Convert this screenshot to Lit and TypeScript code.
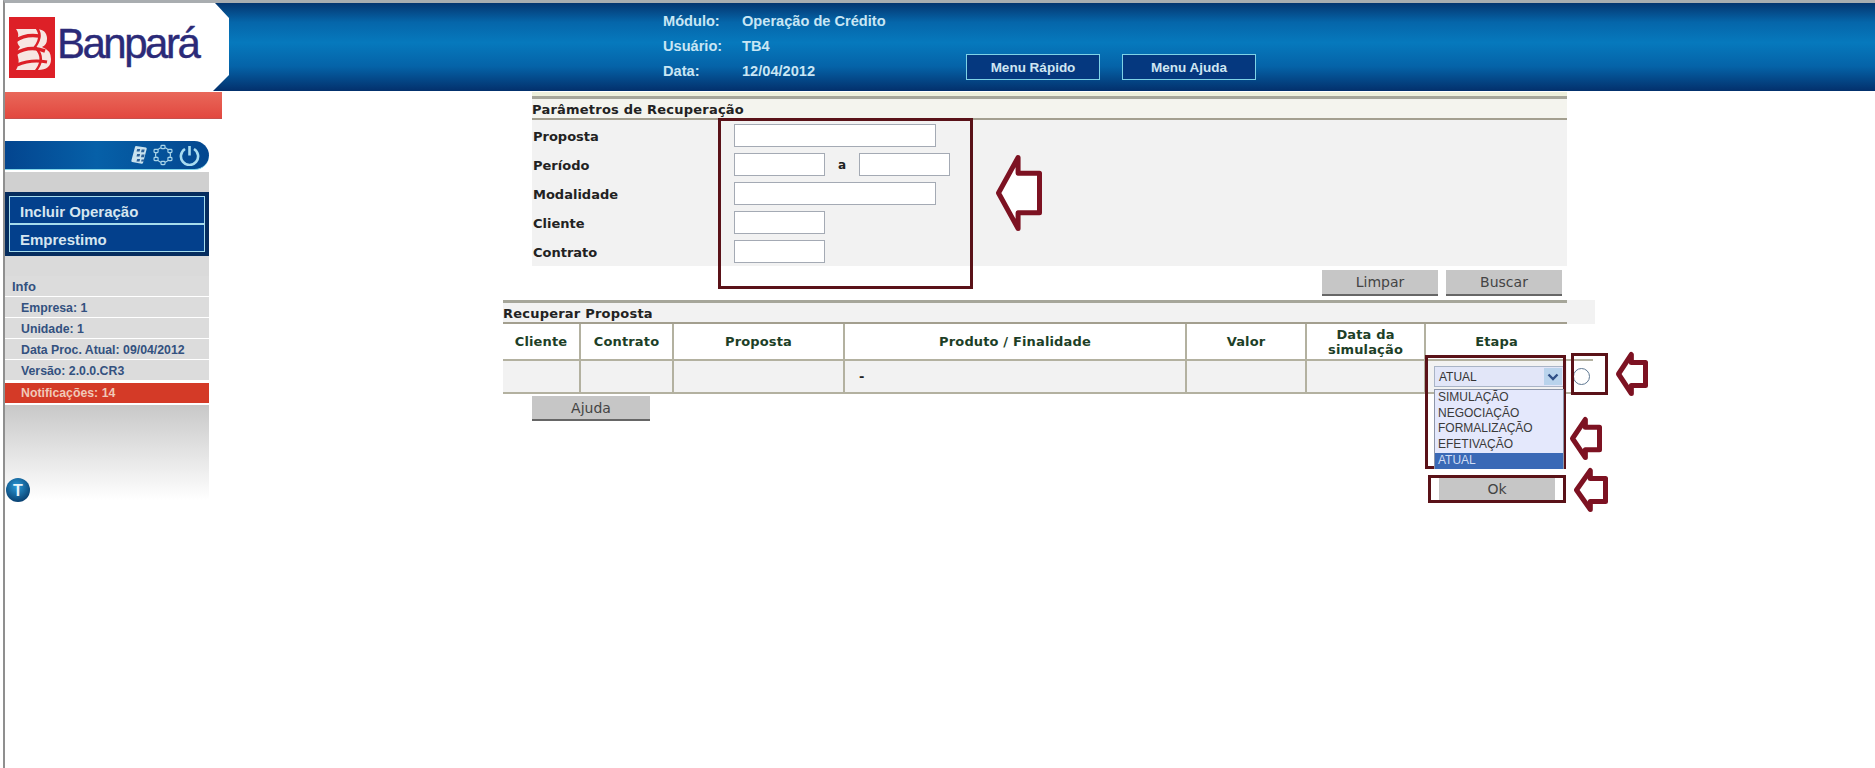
import { LitElement, html, css, svg } from 'lit';
import { customElement } from 'lit/decorators.js';

const INFO = ['Empresa: 1', 'Unidade: 1', 'Data Proc. Atual: 09/04/2012', 'Versão: 2.0.0.CR3'];
const FIELDS = [
  { label: 'Proposta', inputs: ['wide'] },
  { label: 'Período', inputs: ['short', 'short'] },
  { label: 'Modalidade', inputs: ['wide'] },
  { label: 'Cliente', inputs: ['short'] },
  { label: 'Contrato', inputs: ['short'] },
];
const COLUMNS = [
  { title: 'Cliente', width: 77 },
  { title: 'Contrato', width: 93 },
  { title: 'Proposta', width: 171 },
  { title: 'Produto / Finalidade', width: 342 },
  { title: 'Valor', width: 120 },
  { title: 'Data da simulação', width: 119 },
  { title: 'Etapa', width: 142 },
];
const OPTIONS = ['SIMULAÇÃO', 'NEGOCIAÇÃO', 'FORMALIZAÇÃO', 'EFETIVAÇÃO', 'ATUAL'];

// Red annotations drawn over the page: [left, top, width, height]
const BOXES = [
  [718, 118, 255, 171],
  [1425, 355, 141, 114],
  [1571, 353, 37, 42],
  [1428, 475, 138, 28],
];
const ARROWS = [
  [996, 155, 46, 76],
  [1616, 352, 32, 44],
  [1570, 417, 32, 43],
  [1574, 468, 34, 44],
];

@customElement('app-root')
export class AppRoot extends LitElement {
  static override styles = css`
    :host {
      display: block;
    }
    .page {
      position: relative;
      box-sizing: border-box;
      height: 768px;
      margin-left: 3px;
      border-left: 2px solid #8f8f8f;
      border-top: 3px solid #a9adb0;
      overflow: hidden;
      background: #fff;
      font-family: 'Liberation Sans', Arial, sans-serif;
    }
    header {
      display: flex;
      height: 88px;
      background: linear-gradient(#04356f 0%, #0566aa 22%, #0679bd 45%, #0563a8 72%, #03306c 100%);
    }
    .logo {
      display: flex;
      align-items: flex-start;
      box-sizing: border-box;
      width: 224px;
      height: 88px;
      padding: 14px 0 0 4px;
      background: #fff;
      clip-path: polygon(0 0, 210px 0, 224px 15px, 224px 72px, 208px 88px, 0 88px);
    }
    .logo svg {
      flex: none;
    }
    .logo span {
      margin: 3px 0 0 2px;
      font-size: 42px;
      line-height: 48px;
      letter-spacing: -2.5px;
      color: #2b2a78;
      -webkit-text-stroke: 0.4px #2b2a78;
    }
    .head-info {
      display: grid;
      grid-template-columns: 79px auto;
      grid-auto-rows: 25px;
      align-items: center;
      width: 303px;
      margin: 5px 0 0 434px;
      font-size: 14.6px;
      font-weight: bold;
      color: #c9e6f4;
    }
    .head-actions {
      display: flex;
      gap: 22px;
      margin-top: 51px;
    }
    .head-actions button {
      width: 134px;
      height: 26px;
      padding: 0;
      border: 1px solid #7fd3e6;
      background: #05387f;
      color: #cfe6f2;
      font: bold 13.5px 'Liberation Sans', Arial, sans-serif;
    }
    .content {
      display: flex;
    }
    aside {
      flex: none;
      width: 217px;
    }
    .red-bar {
      height: 26px;
      margin-top: 1px;
      background: linear-gradient(#e9685a, #e2483f);
      border-bottom: 1px solid #c8504c;
    }
    .side-col {
      width: 204px;
    }
    .tools {
      display: flex;
      align-items: center;
      justify-content: flex-end;
      gap: 5px;
      box-sizing: border-box;
      height: 29px;
      margin-top: 22px;
      padding-right: 9px;
      background: linear-gradient(90deg, #03458f, #0660a8 45%, #03478f);
      border-bottom: 1px solid #7fd6ea;
      border-radius: 0 15px 15px 0;
    }
    .spacer {
      height: 20px;
      margin-top: 2px;
      background: #d0d0d0;
    }
    .menu {
      box-sizing: border-box;
      height: 64px;
      padding: 4px;
      background: #052c5e;
    }
    .menu div {
      box-sizing: border-box;
      height: 28px;
      padding: 2px 0 0 10px;
      border: 1px solid #a6dcec;
      background: #03408c;
      color: #d6e6f0;
      font-size: 15px;
      font-weight: bold;
      line-height: 26px;
    }
    .side-gap {
      height: 20px;
      background: #dadada;
    }
    .rows {
      display: flex;
      flex-direction: column;
      gap: 1px;
      color: #33517f;
      font-size: 12.3px;
      font-weight: bold;
    }
    .rows div {
      height: 20px;
      padding-left: 16px;
      background: #dcdcdc;
      line-height: 22px;
    }
    .rows .title {
      padding-left: 7px;
      font-size: 13px;
    }
    .rows .alert {
      margin-top: 2px;
      background: #d43a27;
      color: #f0c8b8;
      line-height: 20px;
    }
    .fade {
      position: relative;
      height: 95px;
      margin-top: 2px;
      background: linear-gradient(#c8c8c8, #fff);
    }
    .fade svg {
      position: absolute;
      left: 0;
      bottom: -3px;
    }
    main {
      flex: 1;
      color: #222;
      font-family: 'DejaVu Sans', Verdana, sans-serif;
      font-size: 13px;
    }
    .params {
      width: 1035px;
      margin: 1px 0 0 310px;
      padding-top: 4px;
      background: linear-gradient(#eef0dc, #eef0dc) top / 100% 4px no-repeat;
    }
    .sec-title {
      box-sizing: border-box;
      height: 24px;
      border-top: 3px solid #a6a69a;
      border-bottom: 2px solid #a39f8f;
      background: #f4f4ee;
      font-weight: bold;
      line-height: 21px;
      letter-spacing: 0.22px;
    }
    .form {
      display: grid;
      gap: 6px;
      height: 146px;
      box-sizing: border-box;
      padding: 4px 0 0 1px;
      background: #f2f2f2;
      grid-auto-rows: 23px;
      font-weight: bold;
    }
    .field {
      display: grid;
      grid-template-columns: 201px auto;
      align-items: center;
    }
    .field > span {
      padding-top: 2px;
    }
    .inputs {
      display: flex;
      align-items: center;
    }
    input {
      box-sizing: border-box;
      height: 23px;
      padding: 0;
      border: 1px solid #a4aab4;
      background: #fff;
    }
    .wide {
      width: 202px;
    }
    .short {
      width: 91px;
    }
    .sep {
      width: 34px;
      text-align: center;
      font-size: 12px;
    }
    .actions {
      display: flex;
      justify-content: flex-end;
      gap: 8px;
      padding: 4px 5px 0 0;
    }
    .btn {
      box-sizing: border-box;
      width: 116px;
      height: 26px;
      padding: 0;
      border: none;
      border-bottom: 2px solid #666;
      background: #c6c6c6;
      color: #444;
      font: 14px 'DejaVu Sans', Verdana, sans-serif;
    }
    .results {
      width: 1092px;
      margin: 4px 0 0 281px;
    }
    .results-head {
      background: #f2f2f2;
    }
    .results-head .sec-title {
      width: 1064px;
      background: none;
    }
    table {
      width: 1090px;
      border-collapse: collapse;
      table-layout: fixed;
    }
    th {
      height: 35px;
      padding: 0;
      border: 2px solid #b3b1a0;
      border-width: 0 2px 2px 0;
      color: #1d3f27;
      font-size: 13px;
      line-height: 15px;
      letter-spacing: 0.15px;
    }
    th:nth-child(7) {
      border-right: none;
    }
    td {
      height: 31px;
      padding: 0;
      border: 2px solid #b3b1a0;
      border-width: 0 2px 2px 0;
      background: #f2f2f2;
      font-weight: bold;
    }
    td.dash {
      padding-left: 14px;
    }
    td.choice {
      position: relative;
      border-right: none;
    }
    th.radio-col {
      border-right: none;
    }
    td.radio-col {
      border-right: none;
      background: #fff;
    }
    .radio {
      box-sizing: border-box;
      width: 17px;
      height: 17px;
      margin-left: 6px;
      border: 1px solid #5f7892;
      border-radius: 50%;
      background: #fff;
    }
    .select {
      display: flex;
      align-items: center;
      justify-content: space-between;
      box-sizing: border-box;
      width: 130px;
      height: 21px;
      margin-left: 8px;
      padding: 0 1px 0 4px;
      border: 1px solid #a9b4c6;
      background: #e2e6f8;
      color: #333;
      font: 12px 'Liberation Sans', Arial, sans-serif;
    }
    .select i {
      display: flex;
      align-items: center;
      justify-content: center;
      width: 18px;
      height: 17px;
      background: #b9d3ec;
    }
    .list {
      position: absolute;
      top: 28px;
      left: 8px;
      z-index: 1;
      box-sizing: border-box;
      width: 130px;
      height: 80px;
      border: 1px solid #8d96aa;
      background: #e4e8fc;
      color: #3a3a3a;
      font: 12px/15.7px 'Liberation Sans', Arial, sans-serif;
    }
    .list div {
      padding-left: 3px;
    }
    .list .on {
      background: #3a69b6;
      color: #cfdcf4;
    }
    .foot {
      display: flex;
      justify-content: space-between;
      width: 1064px;
    }
    .foot .btn {
      height: 25px;
    }
    .help {
      width: 118px;
      margin: 2px 0 0 29px;
    }
    .foot .ok {
      height: 23px;
      margin: 83px 12px 0 0;
      border-bottom: none;
    }
    .mark {
      position: absolute;
      box-sizing: border-box;
      border: 3px solid #5a1218;
    }
    .arrow {
      position: absolute;
      overflow: visible;
    }
  `;

  private renderArrow([x, y, w, h]: number[]) {
    // page has a 5px left / 3px top offset from the window
    const mid = w * 0.48;
    const inset = 2.5;
    const points = [
      [inset, h / 2],
      [mid, inset],
      [mid, h * 0.24],
      [w - inset, h * 0.24],
      [w - inset, h * 0.76],
      [mid, h * 0.76],
      [mid, h - inset],
    ]
      .map((p) => p.join(','))
      .join(' ');
    return html`<svg
      class="arrow"
      width=${w}
      height=${h}
      style="left:${x - 5}px;top:${y - 3}px"
    >
      ${svg`<polygon points=${points} fill="#fff" stroke="#7d1222" stroke-width="5" stroke-linejoin="round" />`}
    </svg>`;
  }

  private renderLogoMark() {
    return html`<svg width="46" height="61" viewBox="0 0 46 61">
      <rect width="46" height="61" fill="#dd2027" />
      <path
        d="M7 12 H27 Q38 12 38 22 Q38 28 33 30 Q42 33 42 42 Q42 53 29 53 H7 Q11 46 9 40 Q7 34 11 30 Q7 26 9 20 Q10 16 7 12Z"
        fill="#f7e6e2"
      />
      <g fill="none" stroke="#dd2027">
        <path d="M26 9 Q35 18 26 30 Q38 42 25 56" stroke-width="2.5" />
        <path d="M6 24 Q16 17 30 19" stroke-width="3.5" />
        <path d="M6 37 Q20 28 36 34" stroke-width="3.5" />
        <path d="M8 48 Q22 42 38 45" stroke-width="3" />
      </g>
    </svg>`;
  }

  private renderTools() {
    const nodes = [0, 60, 120, 180, 240, 300].map((deg) => {
      const rad = ((deg - 90) * Math.PI) / 180;
      return [11 + 8 * Math.cos(rad), 11 + 8 * Math.sin(rad)];
    });
    return html`
      <svg width="16" height="20" viewBox="0 0 16 20">
        <path d="M5 1 L15 2.5 Q16 3 15.7 4 L12 18 Q11.6 19 10.6 18.8 L1.2 17 Q0 16.7 0.4 15.6 L4 2 Q4.2 1 5 1Z" fill="#c8e2ee" />
        <g fill="#2a5f96">
          <rect x="5.6" y="4" width="3" height="2.6" transform="skewX(-14) translate(1.6 0)" />
          <rect x="10.2" y="4.6" width="3" height="2.6" transform="skewX(-14) translate(1.6 0)" />
          <rect x="5.6" y="9" width="3" height="2.6" transform="skewX(-14) translate(2.8 0)" />
          <rect x="10.2" y="9.6" width="3" height="2.6" transform="skewX(-14) translate(2.8 0)" />
          <rect x="5.6" y="14" width="3" height="2.4" transform="skewX(-14) translate(4 0)" />
          <rect x="10.2" y="14.6" width="3" height="2" transform="skewX(-14) translate(4 0)" />
        </g>
      </svg>
      <svg width="22" height="22" viewBox="0 0 22 22" fill="#0a5ba4" stroke="#a8d4e8" stroke-width="1.2">
        <circle cx="11" cy="11" r="7.5" fill="none" />
        ${nodes.map(
          ([cx, cy]) => svg`<rect x=${cx - 2} y=${cy - 1.6} width="4" height="3.2" rx="0.8" />`
        )}
      </svg>
      <svg width="21" height="21" viewBox="0 0 21 21" fill="none" stroke="#a8dcf0" stroke-width="2.6">
        <path d="M6 4 A8.6 8.6 0 1 0 15 4" />
        <path d="M10.5 1 V10.5" />
      </svg>
    `;
  }

  override render() {
    return html`
      <div class="page">
        <header>
          <div class="logo">${this.renderLogoMark()}<span>Banpará</span></div>
          <div class="head-info">
            <span>Módulo:</span><span>Operação de Crédito</span>
            <span>Usuário:</span><span>TB4</span>
            <span>Data:</span><span>12/04/2012</span>
          </div>
          <div class="head-actions">
            <button>Menu Rápido</button>
            <button>Menu Ajuda</button>
          </div>
        </header>
        <div class="content">
          <aside>
            <div class="red-bar"></div>
            <div class="side-col">
              <div class="tools">${this.renderTools()}</div>
              <div class="spacer"></div>
              <div class="menu">
                <div>Incluir Operação</div>
                <div>Emprestimo</div>
              </div>
              <div class="side-gap"></div>
              <div class="rows">
                <div class="title">Info</div>
                ${INFO.map((row) => html`<div>${row}</div>`)}
                <div class="alert">Notificações: 14</div>
              </div>
              <div class="fade">
                <svg width="26" height="26" viewBox="0 0 26 26">
                  <defs>
                    <radialGradient id="ball" cx="45%" cy="35%" r="70%">
                      <stop offset="0" stop-color="#2a9ad8" />
                      <stop offset="1" stop-color="#063a6a" />
                    </radialGradient>
                  </defs>
                  <circle cx="13" cy="13" r="12" fill="url(#ball)" />
                  <text x="13" y="19" text-anchor="middle" font-family="Liberation Sans" font-weight="bold" font-size="16" fill="#e8f4fa">T</text>
                </svg>
              </div>
            </div>
          </aside>
          <main>
            <section class="params">
              <div class="sec-title">Parâmetros de Recuperação</div>
              <div class="form">
                ${FIELDS.map(
                  (field) => html`
                    <div class="field">
                      <span>${field.label}</span>
                      <div class="inputs">
                        ${field.inputs.map(
                          (size, i) => html`
                            ${i > 0 ? html`<span class="sep">a</span>` : ''}
                            <input class=${size} />
                          `
                        )}
                      </div>
                    </div>
                  `
                )}
              </div>
              <div class="actions">
                <button class="btn">Limpar</button>
                <button class="btn">Buscar</button>
              </div>
            </section>
            <section class="results">
              <div class="results-head">
                <div class="sec-title">Recuperar Proposta</div>
              </div>
              <table>
                <colgroup>
                  ${COLUMNS.map((col) => html`<col style="width:${col.width}px" />`)}
                  <col style="width:26px" />
                </colgroup>
                <tr>
                  ${COLUMNS.map((col) => html`<th>${col.title}</th>`)}
                  <th class="radio-col"></th>
                </tr>
                <tr>
                  <td></td>
                  <td></td>
                  <td></td>
                  <td class="dash">-</td>
                  <td></td>
                  <td></td>
                  <td class="choice">
                    <div class="select">
                      ATUAL
                      <i>
                        <svg width="12" height="8" viewBox="0 0 12 8" fill="none" stroke="#2f4f86" stroke-width="2.4">
                          <path d="M1.5 1.5 L6 6 L10.5 1.5" />
                        </svg>
                      </i>
                    </div>
                    <div class="list">
                      ${OPTIONS.map(
                        (opt) => html`<div class=${opt === 'ATUAL' ? 'on' : ''}>${opt}</div>`
                      )}
                    </div>
                  </td>
                  <td class="radio-col"><div class="radio"></div></td>
                </tr>
              </table>
              <div class="foot">
                <button class="btn help">Ajuda</button>
                <button class="btn ok">Ok</button>
              </div>
            </section>
          </main>
        </div>
        ${BOXES.map(
          ([x, y, w, h]) =>
            html`<div class="mark" style="left:${x - 5}px;top:${y - 3}px;width:${w}px;height:${h}px"></div>`
        )}
        ${ARROWS.map((a) => this.renderArrow(a))}
      </div>
    `;
  }
}
